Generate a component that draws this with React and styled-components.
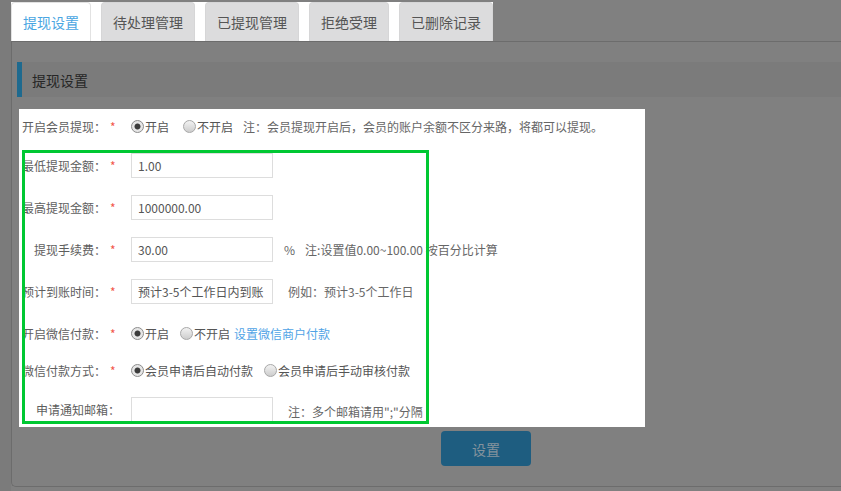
import React from 'react';
import styled, { createGlobalStyle } from 'styled-components';

const GlobalStyle = createGlobalStyle`
    body {
        margin: 0;
        background: #7b7b7b;
        font-family: "Noto Sans CJK SC", "Noto Sans", sans-serif;
        overflow: hidden;
    }
    * {
        box-sizing: border-box;
    }
`;

const tabs = ['提现设置', '待处理管理', '已提现管理', '拒绝受理', '已删除记录'];

export default function App() {
    return (
        <Page>
            <GlobalStyle />
            <Main>
                <TabBar>
                    {tabs.map((t, i) => (
                        <Tab key={t} $active={i === 0}>
                            {t}
                        </Tab>
                    ))}
                </TabBar>
                <Panel>
                    <SectionTitle>提现设置</SectionTitle>
                    <FormBox>
                        <Row $top={5}>
                            <Label>开启会员提现：</Label>
                            <Required>*</Required>
                            <Option $checked>开启</Option>
                            <Option $gap={14}>不开启</Option>
                            <Note $gap={10}>注：会员提现开启后，会员的账户余额不区分来路，将都可以提现。</Note>
                        </Row>
                        <Row $top={14}>
                            <Label>最低提现金额：</Label>
                            <Required>*</Required>
                            <Input defaultValue="1.00" />
                        </Row>
                        <Row>
                            <Label>最高提现金额：</Label>
                            <Required>*</Required>
                            <Input defaultValue="1000000.00" />
                        </Row>
                        <Row>
                            <Label>提现手续费：</Label>
                            <Required>*</Required>
                            <Input defaultValue="30.00" />
                            <Note $gap={11}>%</Note>
                            <Note $gap={10}>注:设置值0.00~100.00 按百分比计算</Note>
                        </Row>
                        <Row>
                            <Label>预计到账时间：</Label>
                            <Required>*</Required>
                            <Input defaultValue="预计3-5个工作日内到账" />
                            <Note $gap={15}>例如：预计3-5个工作日</Note>
                        </Row>
                        <Row>
                            <Label>开启微信付款：</Label>
                            <Required>*</Required>
                            <Option $checked>开启</Option>
                            <Option $gap={11}>不开启</Option>
                            <LinkText>设置微信商户付款</LinkText>
                        </Row>
                        <Row $top={12}>
                            <Label>微信付款方式：</Label>
                            <Required>*</Required>
                            <Option $checked>会员申请后自动付款</Option>
                            <Option $gap={11}>会员申请后手动审核付款</Option>
                        </Row>
                        <Row $top={14}>
                            <Label $w={98}>申请通知邮箱：</Label>
                            <Required $w={11} />
                            <Input />
                            <Note $gap={15} $down={2}>注：多个邮箱请用";"分隔</Note>
                        </Row>
                        <Highlight />
                    </FormBox>
                    <ButtonRow>
                        <SubmitButton>设置</SubmitButton>
                    </ButtonRow>
                </Panel>
            </Main>
        </Page>
    );
}

function Option({ $checked, $gap, children }) {
    return (
        <OptionLabel $gap={$gap}>
            <Radio $checked={$checked} />
            {children}
        </OptionLabel>
    );
}

const Page = styled.div`
    height: 100vh;
    padding-left: 11px;
`;

const Main = styled.div`
    height: 100%;
    background: #808080;
    padding-top: 2px;
`;

const TabBar = styled.div`
    display: inline-flex;
    gap: 10px;
    background: #ffffff;
    height: 39px;
`;

const Tab = styled.div`
    height: 39px;
    padding: 0 11px;
    display: flex;
    align-items: center;
    font-size: 14px;
    border-radius: 4px 4px 0 0;
    color: ${(p) => (p.$active ? '#4aa6e2' : '#555555')};
    background: ${(p) => (p.$active ? '#ffffff' : '#dcdcdd')};
    border: 1px solid ${(p) => (p.$active ? '#e2e2e2' : '#d6d6d7')};
    border-bottom: none;
`;

const Panel = styled.div`
    height: 446px;
    border: 1px solid #6c6c6c;
    border-right: none;
    border-radius: 0 0 0 5px;
    padding: 20px 0 0 5px;
`;

const SectionTitle = styled.div`
    height: 35px;
    background: #7b7b7b;
    border-left: 5px solid #1e6a8f;
    padding-left: 10px;
    display: flex;
    align-items: center;
    font-size: 14px;
    color: #262626;
`;

const FormBox = styled.div`
    position: relative;
    margin: 12px 0 0 2px;
    width: 626px;
    height: 318px;
    overflow: hidden;
    background: #ffffff;
    padding-left: 3px;
    font-size: 12px;
    color: #606060;
`;

const Highlight = styled.div`
    position: absolute;
    left: 3px;
    top: 41px;
    width: 407px;
    height: 274px;
    border: 3px solid #00c832;
    pointer-events: none;
`;

const Row = styled.div`
    display: flex;
    align-items: center;
    height: 25px;
    margin-top: ${(p) => (p.$top != null ? p.$top : 17)}px;
    line-height: 18px;
    white-space: nowrap;
`;

const Label = styled.span`
    width: ${(p) => p.$w || 84}px;
    text-align: right;
    flex-shrink: 0;
    color: #5e5e5e;
`;

const Required = styled.span`
    width: ${(p) => p.$w || 25}px;
    flex-shrink: 0;
    padding-left: 4px;
    color: #f2564a;
    font-size: 12px;
`;

const Input = styled.input`
    width: 142px;
    height: 25px;
    border: 1px solid #dddddd;
    padding: 0 6px;
    font-family: inherit;
    font-size: 12px;
    color: #555555;
    outline: none;
    flex-shrink: 0;
`;

const OptionLabel = styled.span`
    display: inline-flex;
    align-items: center;
    gap: 1px;
    margin-left: ${(p) => p.$gap || 0}px;
    color: #555555;
`;

const Radio = styled.span`
    width: 13px;
    height: 13px;
    border-radius: 50%;
    border: 1px solid ${(p) => (p.$checked ? '#8c8c8c' : '#a8a8a8')};
    background: ${(p) =>
        p.$checked
            ? 'radial-gradient(circle, #3c3c3c 0 2.6px, #e6e6e6 3.4px)'
            : 'linear-gradient(#f2f2f2, #cdcdcd)'};
`;

const Note = styled.span`
    margin-left: ${(p) => p.$gap || 0}px;
    position: relative;
    top: ${(p) => p.$down || 0}px;
    color: #666666;
`;

const LinkText = styled.span`
    margin-left: 4px;
    color: #4fa3e6;
`;

const ButtonRow = styled.div`
    margin-top: 4px;
    padding-left: 424px;
`;

const SubmitButton = styled.button`
    width: 90px;
    height: 35px;
    border: none;
    border-radius: 4px;
    background: #1e5d80;
    color: #85939d;
    font-family: inherit;
    font-size: 14px;
`;
